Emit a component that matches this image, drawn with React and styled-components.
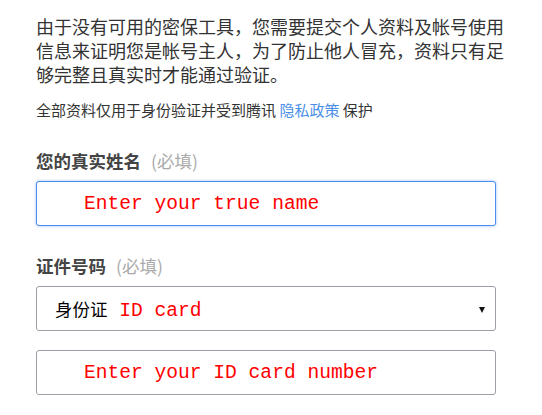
import React from "react";
import styled, { createGlobalStyle } from "styled-components";

const GlobalStyle = createGlobalStyle`
  body {
    margin: 0;
    background: #fff;
    font-family: "Noto Sans CJK SC", "Noto Sans", sans-serif;
  }
`;

const Page = styled.div`
  width: 460px;
  padding: 14px 0 0 36px;
`;

const Intro = styled.p`
  width: 480px;
  margin: 0;
  font-size: 18px;
  line-height: 24px;
  color: #333;
`;

const Note = styled.p`
  margin: 14px 0 0;
  font-size: 15px;
  line-height: 20px;
  color: #333;
`;

const Link = styled.a`
  color: #4a8fe6;
  text-decoration: none;
`;

const Field = styled.div`
  display: flex;
  flex-direction: column;
  gap: 8px;
  margin-top: ${(p) => p.$top}px;
`;

const Label = styled.div`
  font-size: 17.5px;
  line-height: 24px;
  font-weight: 700;
  color: #444;
`;

const Required = styled.span`
  margin-left: 10px;
  font-weight: 400;
  color: #aaa;
`;

const Box = styled.div`
  box-sizing: border-box;
  height: 45px;
  display: flex;
  align-items: center;
  border: 1px solid ${(p) => (p.$focus ? "#4a8cf0" : "#9ca1a8")};
  border-radius: 3px;
  box-shadow: ${(p) => (p.$focus ? "0 0 3px rgba(74, 140, 240, 0.55)" : "none")};
  background: #fff;
`;

const InputBox = styled(Box)`
  padding-left: 47px;
`;

const SelectBox = styled(Box)`
  padding: 0 10px 0 18px;
  justify-content: space-between;
`;

const Hint = styled.span`
  font-family: "Liberation Mono", "Courier New", monospace;
  font-size: 19.6px;
  color: #ff0000;
  white-space: pre;
`;

const Option = styled.span`
  font-size: 17.5px;
  color: #000;
`;

const Arrow = styled.span`
  width: 0;
  height: 0;
  margin-top: 2px;
  border-left: 3.5px solid transparent;
  border-right: 3.5px solid transparent;
  border-top: 6px solid #111;
`;

export default function App() {
  return (
    <>
      <GlobalStyle />
      <Page>
        <Intro>
          由于没有可用的密保工具，您需要提交个人资料及帐号使用信息来证明您是帐号主人，为了防止他人冒充，资料只有足够完整且真实时才能通过验证。
        </Intro>
        <Note>
          全部资料仅用于身份验证并受到腾讯 <Link href="#">隐私政策</Link> 保护
        </Note>

        <Field $top={29}>
          <Label>
            您的真实姓名<Required>(必填)</Required>
          </Label>
          <InputBox $focus>
            <Hint>Enter your true name</Hint>
          </InputBox>
        </Field>

        <Field $top={28}>
          <Label>
            证件号码<Required>(必填)</Required>
          </Label>
          <SelectBox>
            <span>
              <Option>身份证</Option>
              <Hint> ID card</Hint>
            </span>
            <Arrow />
          </SelectBox>
        </Field>

        <Field $top={19}>
          <InputBox>
            <Hint>Enter your ID card number</Hint>
          </InputBox>
        </Field>
      </Page>
    </>
  );
}
